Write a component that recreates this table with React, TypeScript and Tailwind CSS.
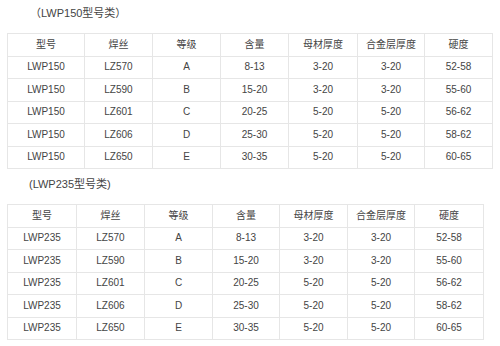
const headers = ['型号', '焊丝', '等级', '含量', '母材厚度', '合金层厚度', '硬度'];

const rows150 = [
  ['LWP150', 'LZ570', 'A', '8-13', '3-20', '3-20', '52-58'],
  ['LWP150', 'LZ590', 'B', '15-20', '3-20', '3-20', '55-60'],
  ['LWP150', 'LZ601', 'C', '20-25', '5-20', '5-20', '56-62'],
  ['LWP150', 'LZ606', 'D', '25-30', '5-20', '5-20', '58-62'],
  ['LWP150', 'LZ650', 'E', '30-35', '5-20', '5-20', '60-65'],
];

const rows235 = rows150.map((r) => ['LWP235', ...r.slice(1)]);

function SpecTable({ rows, cols, width }: { rows: string[][]; cols: number[]; width: number }) {
  return (
    <table className="table-fixed border-collapse ml-[7px]" style={{ width }}>
      <colgroup>
        {cols.map((w, i) => (
          <col key={i} style={{ width: w }} />
        ))}
      </colgroup>
      <thead>
        <tr className="h-[22.5px]">
          {headers.map((h) => (
            <th key={h} className="border border-[#e6e6e6] font-normal text-center p-0">
              {h}
            </th>
          ))}
        </tr>
      </thead>
      <tbody>
        {rows.map((r, i) => (
          <tr key={i} className="h-[22.5px]">
            {r.map((c, j) => (
              <td key={j} className="border border-[#e6e6e6] text-center p-0">
                {c}
              </td>
            ))}
          </tr>
        ))}
      </tbody>
    </table>
  );
}

export default function App() {
  return (
    <div
      className="w-[500px] h-[346px] bg-white text-[#444] text-[10px] leading-none overflow-hidden"
      style={{ fontFamily: '"Liberation Sans", "Noto Sans CJK SC", sans-serif' }}
    >
      <div className="h-[26px] flex items-center pl-[30px] text-[11px]">（LWP150型号类）</div>
      <div className="h-[7px]" />
      <SpecTable rows={rows150} cols={[77, 68, 68, 68, 69, 67, 68]} width={485} />
      <div className="h-[30px] flex items-center pl-[29px] text-[11px]">(LWP235型号类)</div>
      <div className="h-[5px]" />
      <SpecTable rows={rows235} cols={[69, 68, 68, 67, 68, 67, 69]} width={476} />
    </div>
  );
}
